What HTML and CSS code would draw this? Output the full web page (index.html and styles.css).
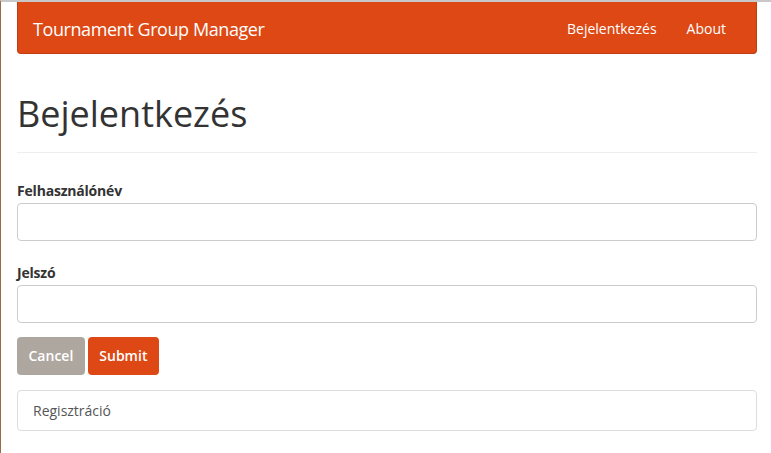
FILE: index.html
```html
<!DOCTYPE html>
<html lang="hu">
<head>
<meta charset="utf-8">
<title>Bejelentkezés</title>
<link rel="stylesheet" href="styles.css">
</head>
<body>
<div class="frame">
  <nav class="navbar">
    <a class="brand" href="#">Tournament Group Manager</a>
    <ul class="nav-links">
      <li><a href="#">Bejelentkezés</a></li>
      <li><a href="#">About</a></li>
    </ul>
  </nav>
  <main class="content">
    <div class="page-header">
      <h1>Bejelentkezés</h1>
    </div>
    <form class="login-form">
      <div class="form-group">
        <label for="user">Felhasználónév</label>
        <input id="user" type="text" class="form-control">
      </div>
      <div class="form-group">
        <label for="pass">Jelszó</label>
        <input id="pass" type="password" class="form-control">
      </div>
      <div class="actions">
        <button type="button" class="btn btn-secondary">Cancel</button>
        <button type="submit" class="btn btn-primary">Submit</button>
      </div>
    </form>
    <div class="list-item"><a href="#">Regisztráció</a></div>
  </main>
</div>
</body>
</html>
```
FILE: styles.css
```css
* { box-sizing: border-box; }
html, body { margin: 0; padding: 0; background: #fff; }
body {
  font-family: "Open Sans", "Noto Sans", sans-serif;
  font-size: 14px;
  color: #333;
  width: 771px;
  height: 453px;
  overflow: hidden;
}
.frame {
  height: 453px;
  border-left: 1px solid #9a6a45;
  border-top: 2px solid #c8c8c8;
  padding: 0 14px 0 16px;
}
.navbar {
  display: flex;
  align-items: center;
  justify-content: space-between;
  height: 52px;
  background: #dd4814;
  border: 1px solid #bf3e11;
  border-top: none;
  border-radius: 0 0 4px 4px;
  padding: 2px 15px 0;
}
.brand {
  color: #fff;
  text-decoration: none;
  font-size: 18px;
  letter-spacing: -0.42px;
}
.nav-links {
  display: flex;
  list-style: none;
  margin: 0;
  padding: 0;
}
.nav-links a {
  display: block;
  color: #fff;
  text-decoration: none;
  padding: 0 15px;
  font-size: 14px;
}
.page-header {
  margin: 40px 0 27px;
  padding-bottom: 18px;
  border-bottom: 1px solid #eee;
}
h1 {
  margin: 0;
  font-size: 36px;
  font-weight: 400;
  line-height: 1.1;
  color: #333;
}
.form-group { margin-bottom: 21px; }
.form-group:nth-child(2) { margin-bottom: 14px; }
label {
  display: block;
  font-weight: 700;
  line-height: 22px;
  margin-bottom: 1px;
  color: #333;
  letter-spacing: -0.2px;
}
.form-control {
  display: block;
  width: 100%;
  height: 38px;
  border: 1px solid #ccc;
  border-radius: 4px;
  font: inherit;
  padding: 6px 12px;
}
.actions { display: flex; gap: 3px; margin-bottom: 15px; }
.btn {
  height: 38px;
  border: none;
  border-radius: 4px;
  color: #fff;
  font: inherit;
  font-weight: 600;
  padding: 0 11.5px;
}
.btn-secondary { background: #aea79f; }
.btn-primary { background: #dd4814; }
.list-item {
  border: 1px solid #ddd;
  border-radius: 4px;
  padding: 10px 15px;
  height: 41px;
}
.list-item a { color: #555; text-decoration: none; }
```
